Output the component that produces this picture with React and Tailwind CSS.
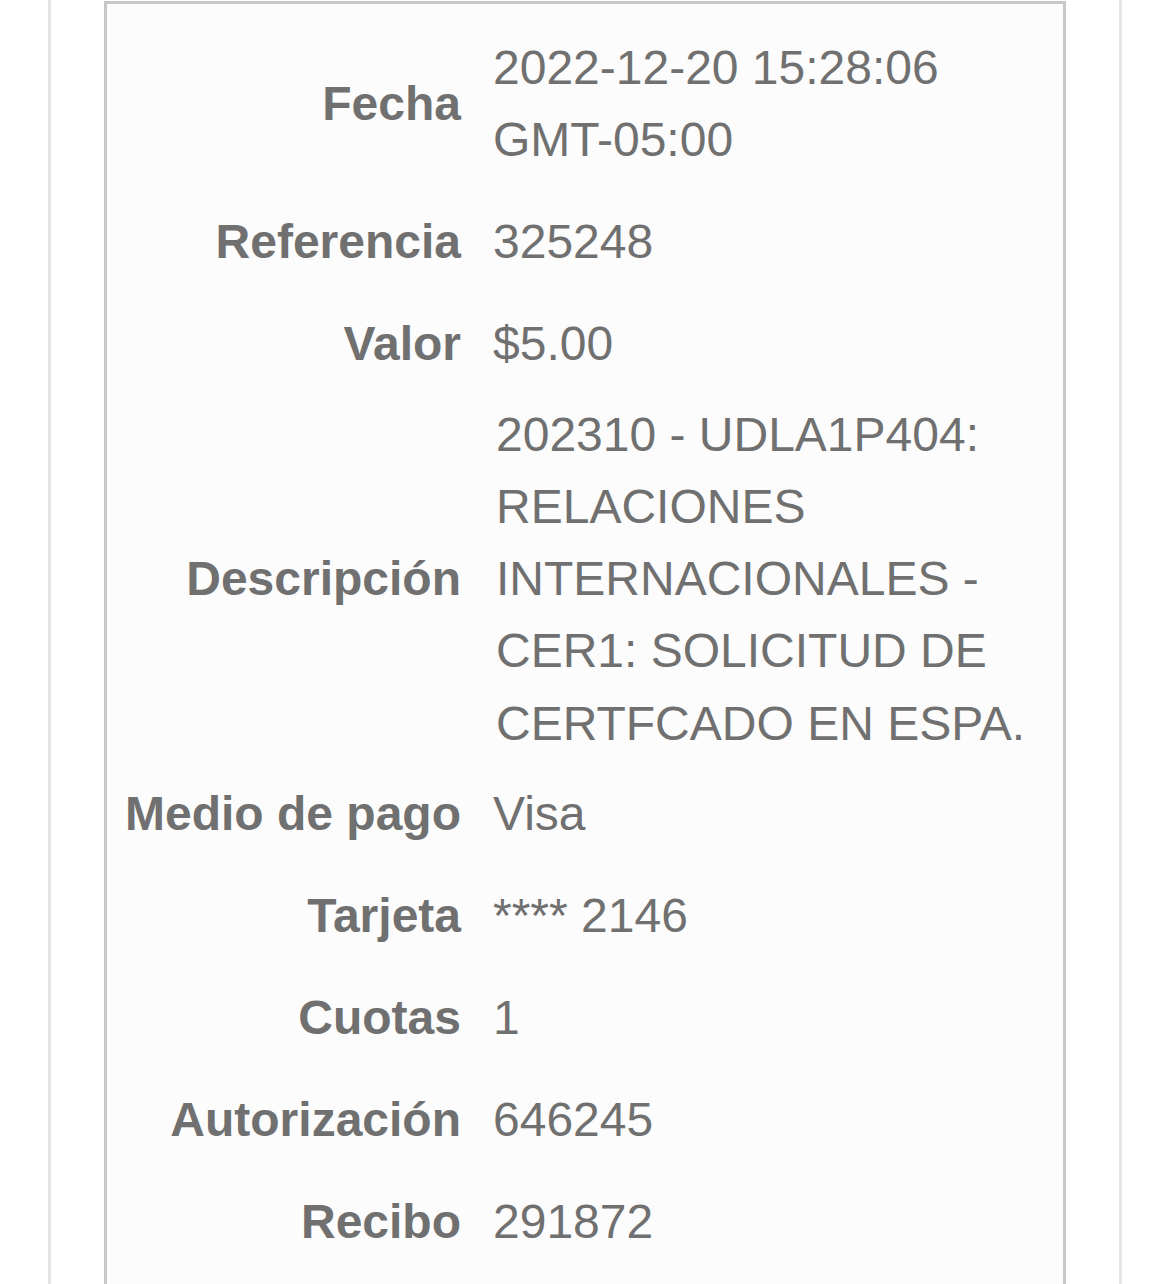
const rows = [
  { label: 'Fecha', value: '2022-12-20 15:28:06 GMT-05:00' },
  { label: 'Referencia', value: '325248' },
  { label: 'Valor', value: '$5.00' },
  {
    label: 'Descripción',
    value:
      '202310 - UDLA1P404: RELACIONES INTERNACIONALES - CER1: SOLICITUD DE CERTFCADO EN ESPA.',
    tight: true,
  },
  { label: 'Medio de pago', value: 'Visa' },
  { label: 'Tarjeta', value: '**** 2146' },
  { label: 'Cuotas', value: '1' },
  { label: 'Autorización', value: '646245' },
  { label: 'Recibo', value: '291872' },
];

export default function App() {
  return (
    <div
      className="min-h-screen bg-white"
      style={{ fontFamily: '"Liberation Sans", Arial, Helvetica, sans-serif' }}
    >
      <div className="mx-[48px] min-h-screen border-x-[3px] border-[#e5e5e5] px-[53px] pt-[1px]">
        <div className="border-[3px] border-b-0 border-[#c8c8c8] bg-[#fcfcfc] pt-[13px] pb-[60px] pr-[15px]">
          <div className="grid grid-cols-[354px_1fr] gap-x-[32px] text-[48px] text-[#707070]">
            {rows.map((row) => (
              <div key={row.label} className="contents">
                <div className="flex items-center justify-end font-bold leading-[72px] whitespace-nowrap">
                  {row.label}
                </div>
                <div
                  className={
                    row.tight
                      ? 'py-[3.5px] pl-[3px] leading-[72.25px]'
                      : 'py-[15px] leading-[72px]'
                  }
                >
                  {row.value}
                </div>
              </div>
            ))}
          </div>
        </div>
      </div>
    </div>
  );
}
